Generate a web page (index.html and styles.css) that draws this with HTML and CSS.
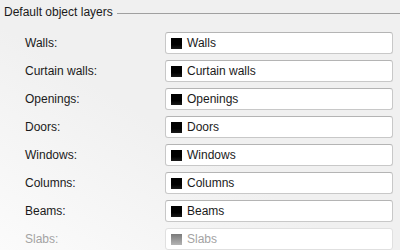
FILE: index.html
```html
<!DOCTYPE html>
<html lang="en">
<head>
    <title>Default object layers</title>
    <meta charset="UTF-8">
    <link rel="stylesheet" href="styles.css">
</head>
<body>
    <main class="panel">
        <div class="group-title">
            <span>Default object layers</span>
            <span class="rule"></span>
        </div>
        <div class="rows">
            <label class="label">Walls:</label>
            <div class="layer"><span class="swatch"></span>Walls</div>

            <label class="label">Curtain walls:</label>
            <div class="layer"><span class="swatch"></span>Curtain walls</div>

            <label class="label">Openings:</label>
            <div class="layer"><span class="swatch"></span>Openings</div>

            <label class="label">Doors:</label>
            <div class="layer"><span class="swatch"></span>Doors</div>

            <label class="label">Windows:</label>
            <div class="layer"><span class="swatch"></span>Windows</div>

            <label class="label">Columns:</label>
            <div class="layer"><span class="swatch"></span>Columns</div>

            <label class="label">Beams:</label>
            <div class="layer"><span class="swatch"></span>Beams</div>

            <label class="label disabled">Slabs:</label>
            <div class="layer disabled"><span class="swatch"></span>Slabs</div>
        </div>
    </main>
</body>
</html>
```

FILE: styles.css
```css
* {
    box-sizing: border-box;
    margin: 0;
    padding: 0;
}

html,
body {
    height: 100%;
}

body {
    background: linear-gradient(to top right, #fbfbfb 0%, #f0f0f0 45%, #f0f0f0 100%);
    font-family: "Liberation Sans", Arial, sans-serif;
    font-size: 12px;
    color: #1a1a1a;
    overflow: hidden;
}

.panel {
    padding: 4px 0 0 4px;
}

.group-title {
    display: flex;
    align-items: center;
    gap: 4px;
    height: 16px;
    line-height: 16px;
}

.rule {
    flex: 1;
    height: 1px;
    margin-top: 2px;
    background-color: #a0a0a0;
}

.rows {
    display: grid;
    grid-template-columns: 140px 228px;
    row-gap: 6px;
    margin-top: 12px;
    padding-left: 21px;
}

.label {
    display: flex;
    align-items: center;
    height: 22px;
}

.layer {
    display: flex;
    align-items: center;
    gap: 5px;
    height: 22px;
    padding-left: 5px;
    background-color: #fff;
    border: 1px solid #c8c8c8;
    border-top-color: #b4b4b4;
    border-radius: 3px;
}

.swatch {
    width: 11px;
    height: 11px;
    background: linear-gradient(to bottom, #000 60%, #1a1a1a);
}

.disabled {
    color: #a3a3a3;
}

.layer.disabled {
    border-color: #e0e0e0;
}

.layer.disabled .swatch {
    background: linear-gradient(to bottom, #7a7a7a, #b4b4b4);
}
```
